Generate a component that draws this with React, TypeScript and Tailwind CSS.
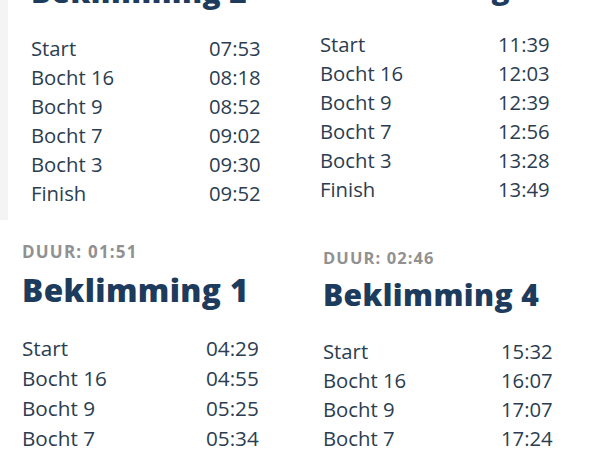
const body = { fontFamily: '"Open Sans", "Noto Sans", sans-serif' };

type Row = [string, string];

const climbs: { title: string; duur: string; rows: Row[] }[] = [
  {
    title: "Beklimming 2",
    duur: "01:59",
    rows: [
      ["Start", "07:53"],
      ["Bocht 16", "08:18"],
      ["Bocht 9", "08:52"],
      ["Bocht 7", "09:02"],
      ["Bocht 3", "09:30"],
      ["Finish", "09:52"],
    ],
  },
  {
    title: "Beklimming 1",
    duur: "01:51",
    rows: [
      ["Start", "04:29"],
      ["Bocht 16", "04:55"],
      ["Bocht 9", "05:25"],
      ["Bocht 7", "05:34"],
      ["Bocht 3", "05:58"],
      ["Finish", "06:20"],
    ],
  },
  {
    title: "Beklimming 3",
    duur: "02:10",
    rows: [
      ["Start", "11:39"],
      ["Bocht 16", "12:03"],
      ["Bocht 9", "12:39"],
      ["Bocht 7", "12:56"],
      ["Bocht 3", "13:28"],
      ["Finish", "13:49"],
    ],
  },
  {
    title: "Beklimming 4",
    duur: "02:46",
    rows: [
      ["Start", "15:32"],
      ["Bocht 16", "16:07"],
      ["Bocht 9", "17:07"],
      ["Bocht 7", "17:24"],
      ["Bocht 3", "17:58"],
      ["Finish", "18:18"],
    ],
  },
];

// normal size card
function Card({ c, className }: { c: (typeof climbs)[number]; className?: string }) {
  return (
    <div className={"bg-white " + (className ?? "")}>
      <p className="text-[16.5px] leading-[20px] font-bold uppercase tracking-[1.1px] text-[#919191]">
        Duur: {c.duur}
      </p>
      <h2 className="mt-[7px] text-[30px] leading-[40px] font-extrabold tracking-[0.4px] text-[#1d3b5c]">
        {c.title}
      </h2>
      <div className="mt-[22px] grid grid-cols-[178px_auto] text-[20.3px] leading-[29px] text-[#2b3d50]">
        {c.rows.map(([name, time]) => (
          <div key={name} className="contents">
            <span>{name}</span>
            <span>{time}</span>
          </div>
        ))}
      </div>
    </div>
  );
}

// the front card is shown a bit bigger
function BigCard({ c, className }: { c: (typeof climbs)[number]; className?: string }) {
  return (
    <div className={"bg-white " + (className ?? "")}>
      <p className="text-[17px] leading-[20px] font-bold uppercase tracking-[1.2px] text-[#919191]">
        Duur: {c.duur}
      </p>
      <h2 className="mt-[8px] text-[31.5px] leading-[40px] font-extrabold tracking-[0.4px] text-[#1d3b5c]">
        {c.title}
      </h2>
      <div className="mt-[23px] grid grid-cols-[184px_auto] text-[20.7px] leading-[30px] text-[#2b3d50]">
        {c.rows.map(([name, time]) => (
          <div key={name} className="contents">
            <span>{name}</span>
            <span>{time}</span>
          </div>
        ))}
      </div>
    </div>
  );
}

export default function App() {
  return (
    <main className="w-[600px] h-[450px] overflow-hidden bg-white flex" style={body}>
      {/* linker kolom */}
      <div className="w-[300px] shrink-0 -mt-[55px] flex flex-col">
        <div className="bg-[#f4f4f4] pl-2">
          <Card c={climbs[0]} className="pl-[23px] pb-[12px]" />
        </div>
        <BigCard c={climbs[1]} className="pl-[22px] pt-[22px]" />
      </div>

      {/* rechter kolom */}
      <div className="w-[300px] shrink-0 -mt-[59px] flex flex-col">
        <Card c={climbs[2]} className="pl-[20px] pb-[44px]" />
        <Card c={climbs[3]} className="pl-[23px]" />
      </div>
    </main>
  );
}
